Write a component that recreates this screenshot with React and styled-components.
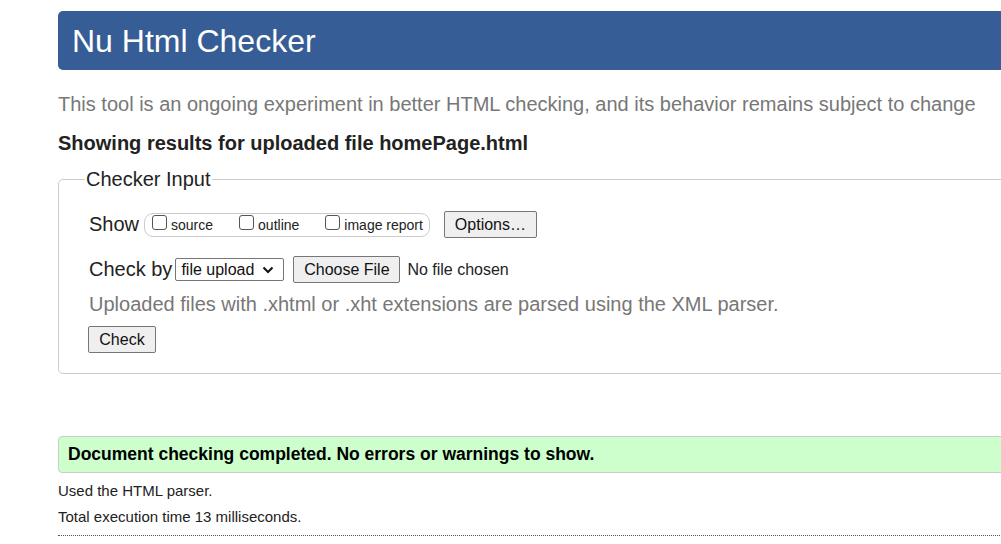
import React from 'react';
import styled, { createGlobalStyle } from 'styled-components';

const Global = createGlobalStyle`
  html, body { margin: 0; padding: 0; background: #fff; overflow: hidden; }
  body { font-family: "Liberation Sans", Arial, sans-serif; color: #222; }
`;

function App() {
  return (
    <>
      <Global />
      <Page>
        <Header>
          <Title>Nu Html Checker</Title>
        </Header>
        <Intro>This tool is an ongoing experiment in better HTML checking, and its behavior remains subject to change</Intro>
        <Results>Showing results for uploaded file homePage.html</Results>
        <Fieldset>
          <Legend>Checker Input</Legend>
          <Row $top={10}>
            <Label>Show</Label>
            <Pill>
              <Opt><Box type="checkbox" />source</Opt>
              <Opt><Box type="checkbox" />outline</Opt>
              <Opt><Box type="checkbox" />image report</Opt>
            </Pill>
            <Button $w={93} $ml={14}>Options…</Button>
          </Row>
          <Row $top={18}>
            <Label>Check by</Label>
            <Select>
              file upload
              <svg width="12" height="8" viewBox="0 0 12 8">
                <path d="M1.5 1.5 L6 6 L10.5 1.5" fill="none" stroke="#111" strokeWidth="2" />
              </svg>
            </Select>
            <Button $w={107} $ml={9}>Choose File</Button>
            <NoFile>No file chosen</NoFile>
          </Row>
          <Hint>Uploaded files with .xhtml or .xht extensions are parsed using the XML parser.</Hint>
          <Button $w={68} $ml={-1}>Check</Button>
        </Fieldset>
        <Success>Document checking completed. No errors or warnings to show.</Success>
        <Note>Used the HTML parser.</Note>
        <Note $top={8}>Total execution time 13 milliseconds.</Note>
        <Dotted />
      </Page>
    </>
  );
}

const Page = styled.div`
  width: 1100px;
  margin-left: 58px;
  padding-top: 11px;
`;

const Header = styled.div`
  height: 59px;
  background: #365d95;
  border-radius: 5px;
  display: flex;
  align-items: center;
  padding-left: 14px;
`;

const Title = styled.h1`
  margin: 0;
  color: #fff;
  font-size: 32px;
  font-weight: normal;
  line-height: 1;
`;

const Intro = styled.p`
  margin: 22px 0 0;
  font-size: 20px;
  line-height: 24px;
  color: #777;
`;

const Results = styled.p`
  margin: 15px 0 0;
  font-size: 20px;
  line-height: 24px;
  font-weight: bold;
  color: #222;
`;

const Fieldset = styled.fieldset`
  margin: 13px 0 0;
  padding: 10px 30px 20px;
  border: 1px solid #ccc;
  border-radius: 5px;
`;

const Legend = styled.legend`
  font-size: 20px;
  padding: 0 1px;
  margin-left: -4px;
  color: #222;
`;

const Row = styled.div`
  display: flex;
  align-items: center;
  margin-top: ${p => p.$top}px;
`;

const Label = styled.span`
  font-size: 20px;
  color: #222;
  margin-right: 3px;
`;

const Pill = styled.div`
  display: flex;
  align-items: center;
  height: 22px;
  margin-left: 2px;
  border: 1px solid #ccc;
  border-radius: 9px;
  padding: 0 6px 0 7px;
  gap: 26px;
`;

const Opt = styled.label`
  display: flex;
  align-items: center;
  font-size: 14px;
  color: #222;
`;

const Box = styled.input`
  appearance: none;
  width: 15px;
  height: 15px;
  margin: -4px 4px 0 0;
  border: 1px solid #555;
  border-radius: 3px;
  background: #fff;
`;

const Button = styled.button`
  width: ${p => p.$w}px;
  height: 27px;
  margin-left: ${p => p.$ml}px;
  font-family: "Liberation Sans", Arial, sans-serif;
  font-size: 16px;
  color: #111;
  background: #efefef;
  border: 1px solid #767676;
  border-radius: 2px;
  padding: 0;
`;

const Select = styled.div`
  display: flex;
  align-items: center;
  gap: 8px;
  width: 109px;
  height: 23px;
  box-sizing: border-box;
  padding: 0 6px 0 5px;
  border: 1px solid #767676;
  border-radius: 2px;
  font-size: 16px;
  color: #111;
`;

const NoFile = styled.span`
  font-size: 16px;
  margin-left: 7px;
  color: #222;
`;

const Hint = styled.p`
  margin: 9px 0 10px;
  font-size: 20px;
  line-height: 24px;
  color: #777;
`;

const Success = styled.div`
  margin-top: 62px;
  height: 37px;
  box-sizing: border-box;
  border: 1px solid #ccc;
  border-radius: 4px;
  background: #ccffcc;
  display: flex;
  align-items: center;
  padding-left: 9px;
  font-size: 17.5px;
  font-weight: bold;
  color: #000;
`;

const Note = styled.p`
  margin: ${p => p.$top || 9}px 0 0;
  font-size: 15px;
  line-height: 18px;
  color: #222;
`;

const Dotted = styled.div`
  margin-top: 9px;
  border-top: 1px dotted #555;
`;

export default App;
